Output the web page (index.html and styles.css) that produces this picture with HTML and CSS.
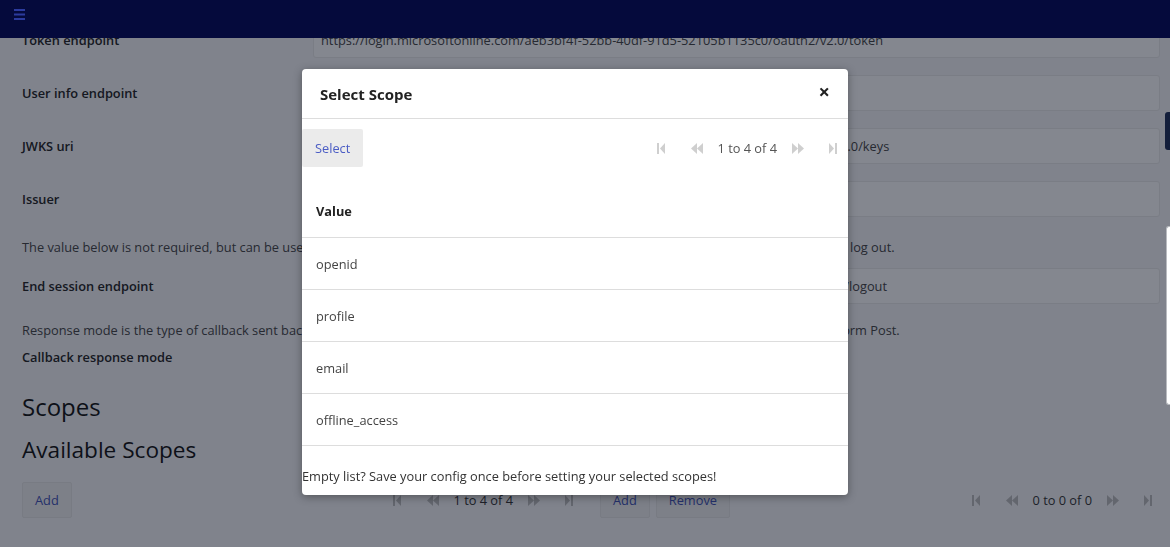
FILE: index.html
```html
<!DOCTYPE html>
<html lang="en">
<head>
    <meta charset="UTF-8">
    <title>OpenID Connect settings</title>
    <link rel="stylesheet" href="styles.css">
</head>
<body>
    <header class="topbar">
        <button class="menu-btn" aria-label="Menu">
            <svg width="11" height="11" viewBox="0 0 11 11"><rect x="0" y="0" width="11" height="2"/><rect x="0" y="4.5" width="11" height="2"/><rect x="0" y="9" width="11" height="2"/></svg>
        </button>
    </header>

    <main class="page">
        <div class="field-row">
            <label>Token endpoint</label>
            <div class="field">https://login.microsoftonline.com/aeb3bf4f-52bb-40df-91d5-52105b1135c0/oauth2/v2.0/token</div>
        </div>
        <div class="field-row">
            <label>User info endpoint</label>
            <div class="field"></div>
        </div>
        <div class="field-row">
            <label>JWKS uri</label>
            <div class="field">https://login.microsoftonline.com/aeb3bf4f-52bb-40df-91d5-52105b1135c0/discovery/v2.0/keys</div>
        </div>
        <div class="field-row">
            <label>Issuer</label>
            <div class="field"></div>
        </div>

        <p class="hint hint-end">The value below is not required, but can be used to redirect the user to the end session endpoint of your OIDC identity provider when they log out.</p>
        <div class="field-row">
            <label>End session endpoint</label>
            <div class="field">https://login.microsoftonline.com/aeb3bf4f-52bb-40df-91d5-52105b1135c0/oauth2/v2.0/logout</div>
        </div>

        <p class="hint">Response mode is the type of callback sent back to your application by the identity provider. The possible values are Query, Fragment or Form Post.</p>
        <div class="plain-row">
            <label>Callback response mode</label>
        </div>

        <h2 class="section-title">Scopes</h2>
        <h3 class="sub-title">Available Scopes</h3>

        <div class="scope-tables">
            <div class="toolbar">
                <div class="btn-group">
                    <button class="btn">Add</button>
                </div>
                <div class="pager">
                    <span class="pg-icon"><svg width="8" height="11" viewBox="0 0 8 11"><rect x="0" y="0" width="2" height="11"/><path d="M8 0 L3 5.5 L8 11 Z"/></svg></span>
                    <span class="pg-icon"><svg width="12" height="11" viewBox="0 0 12 11"><path d="M6 0 L0 5.5 L6 11 Z"/><path d="M12 0 L6 5.5 L12 11 Z"/></svg></span>
                    <span class="pg-text">1 to 4 of 4</span>
                    <span class="pg-icon"><svg width="12" height="11" viewBox="0 0 12 11"><path d="M0 0 L6 5.5 L0 11 Z"/><path d="M6 0 L12 5.5 L6 11 Z"/></svg></span>
                    <span class="pg-icon"><svg width="8" height="11" viewBox="0 0 8 11"><path d="M0 0 L5 5.5 L0 11 Z"/><rect x="6" y="0" width="2" height="11"/></svg></span>
                </div>
            </div>
            <div class="toolbar">
                <div class="btn-group">
                    <button class="btn">Add</button>
                    <button class="btn">Remove</button>
                </div>
                <div class="pager pager-right">
                    <span class="pg-icon"><svg width="8" height="11" viewBox="0 0 8 11"><rect x="0" y="0" width="2" height="11"/><path d="M8 0 L3 5.5 L8 11 Z"/></svg></span>
                    <span class="pg-icon"><svg width="12" height="11" viewBox="0 0 12 11"><path d="M6 0 L0 5.5 L6 11 Z"/><path d="M12 0 L6 5.5 L12 11 Z"/></svg></span>
                    <span class="pg-text">0 to 0 of 0</span>
                    <span class="pg-icon"><svg width="12" height="11" viewBox="0 0 12 11"><path d="M0 0 L6 5.5 L0 11 Z"/><path d="M6 0 L12 5.5 L6 11 Z"/></svg></span>
                    <span class="pg-icon"><svg width="8" height="11" viewBox="0 0 8 11"><path d="M0 0 L5 5.5 L0 11 Z"/><rect x="6" y="0" width="2" height="11"/></svg></span>
                </div>
            </div>
        </div>
    </main>

    <div class="side-tab"></div>
    <div class="side-panel"></div>

    <div class="overlay"></div>

    <div class="modal">
        <div class="modal-header">
            <h4>Select Scope</h4>
            <span class="close">&times;</span>
        </div>
        <div class="modal-toolbar">
            <button class="btn btn-select">Select</button>
            <div class="pager pager-modal">
                <span class="pg-icon"><svg width="8" height="11" viewBox="0 0 8 11"><rect x="0" y="0" width="2" height="11"/><path d="M8 0 L3 5.5 L8 11 Z"/></svg></span>
                <span class="pg-icon"><svg width="12" height="11" viewBox="0 0 12 11"><path d="M6 0 L0 5.5 L6 11 Z"/><path d="M12 0 L6 5.5 L12 11 Z"/></svg></span>
                <span class="pg-text">1 to 4 of 4</span>
                <span class="pg-icon"><svg width="12" height="11" viewBox="0 0 12 11"><path d="M0 0 L6 5.5 L0 11 Z"/><path d="M6 0 L12 5.5 L6 11 Z"/></svg></span>
                <span class="pg-icon"><svg width="8" height="11" viewBox="0 0 8 11"><path d="M0 0 L5 5.5 L0 11 Z"/><rect x="6" y="0" width="2" height="11"/></svg></span>
            </div>
        </div>
        <table class="scope-grid">
            <thead>
                <tr><th>Value</th></tr>
            </thead>
            <tbody>
                <tr><td>openid</td></tr>
                <tr><td>profile</td></tr>
                <tr><td>email</td></tr>
                <tr><td>offline_access</td></tr>
            </tbody>
        </table>
        <p class="modal-note">Empty list? Save your config once before setting your selected scopes!</p>
    </div>
</body>
</html>
```

FILE: styles.css
```css
html, body {
    margin: 0;
    height: 100%;
    overflow: hidden;
}
body {
    font-family: "Open Sans", Arial, sans-serif;
    font-size: 12.8px;
    color: #333;
    background-color: #f7f7f8;
}
.topbar {
    position: fixed;
    top: 0;
    left: 0;
    right: 0;
    height: 38px;
    background-color: #050a3c;
    z-index: 30;
}
.menu-btn {
    background: none;
    border: none;
    padding: 0;
    margin: 8px 0 0 14px;
    fill: #2c3b9e;
    display: block;
}
.page {
    padding: 22px 10px 0 22px;
}
.field-row {
    display: grid;
    grid-template-columns: 291px 1fr;
    align-items: center;
    margin-bottom: 17px;
}
.field-row label, .plain-row label {
    font-weight: 600;
    color: #222;
}
.field {
    height: 36px;
    box-sizing: border-box;
    border: 1px solid #eaeaea;
    border-radius: 3px;
    background-color: #fff;
    padding: 0 7px;
    line-height: 34px;
    color: #444;
    white-space: nowrap;
    overflow: hidden;
}
.hint {
    margin: 0 0 12px 0;
    line-height: 18px;
    color: #444;
    white-space: nowrap;
}
.hint-end {
    margin-top: 21px;
}
.plain-row {
    margin: -4px 0 0 0;
    line-height: 20px;
}
.section-title {
    font-size: 24px;
    font-weight: 400;
    color: #111;
    margin: 24px 0 0 0;
    line-height: 32px;
}
.sub-title {
    font-size: 22.6px;
    font-weight: 400;
    color: #111;
    margin: 11px 0 0 0;
    line-height: 32px;
}
.scope-tables {
    display: grid;
    grid-template-columns: 566px 1fr;
    column-gap: 12px;
    margin-top: 16px;
}
.toolbar {
    display: flex;
    justify-content: space-between;
    align-items: center;
}
.btn-group {
    display: flex;
    gap: 6px;
}
.btn {
    font-family: "Open Sans", Arial, sans-serif;
    font-size: 12.8px;
    color: #3f51b5;
    background-color: #f0f0f0;
    border: 1px solid #e6e6e6;
    border-radius: 2px;
    height: 36px;
    padding: 0 12px;
}
.pager {
    display: flex;
    align-items: center;
    color: #333;
    margin-right: 15px;
}
.pager-right {
    margin-right: 8px;
}
.pg-icon {
    display: inline-flex;
    fill: #bdbdbd;
}
.pg-icon:first-child {
    margin-right: 26px;
}
.pg-icon:last-child {
    margin-left: 25px;
}
.pg-text {
    margin: 0 15px 0 14px;
}
.side-tab {
    position: fixed;
    right: 0;
    top: 112px;
    width: 5px;
    height: 38px;
    background-color: #1d2d57;
    border-radius: 3px 0 0 3px;
}
.side-panel {
    position: fixed;
    right: 0;
    top: 226px;
    width: 3px;
    height: 177px;
    background-color: #fff;
    border: 1px solid #b9bbc0;
    border-right: none;
    border-radius: 3px 0 0 3px;
    z-index: 25;
}
.overlay {
    position: fixed;
    top: 0;
    left: 0;
    right: 0;
    bottom: 0;
    background-color: rgba(9, 15, 31, 0.5);
    z-index: 10;
}
.modal {
    position: fixed;
    left: 302px;
    top: 69px;
    width: 546px;
    height: 426px;
    background-color: #fff;
    border-radius: 4px;
    box-shadow: 0 2px 8px rgba(0, 0, 0, 0.35);
    z-index: 20;
    display: flex;
    flex-direction: column;
}
.modal-header {
    height: 50px;
    box-sizing: border-box;
    border-bottom: 1px solid #ddd;
    display: flex;
    justify-content: space-between;
    align-items: center;
    padding: 0 18px;
}
.modal-header h4 {
    margin: 0;
    font-size: 15px;
    font-weight: 700;
    color: #222;
}
.close {
    font-size: 20px;
    font-weight: 700;
    color: #222;
    margin-top: -4px;
}
.modal-toolbar {
    display: flex;
    justify-content: space-between;
    align-items: center;
    margin-top: 10px;
}
.btn-select {
    color: #4a5cc4;
    background-color: #ebebeb;
    border: none;
    height: 38px;
    padding: 0 13px;
}
.pager-modal {
    color: #555;
    margin-right: 11px;
}
.pager-modal .pg-icon {
    fill: #cfcfcf;
}
.scope-grid {
    width: 100%;
    border-collapse: collapse;
    margin-top: 17px;
}
.scope-grid th, .scope-grid td {
    text-align: left;
    padding: 0 14px;
    height: 51px;
    border-bottom: 1px solid #ddd;
}
.scope-grid th {
    font-weight: 700;
    color: #222;
    height: 53px;
}
.scope-grid td {
    color: #444;
}
.modal-note {
    margin: 21px 0 0 0;
    color: #333;
}
```
